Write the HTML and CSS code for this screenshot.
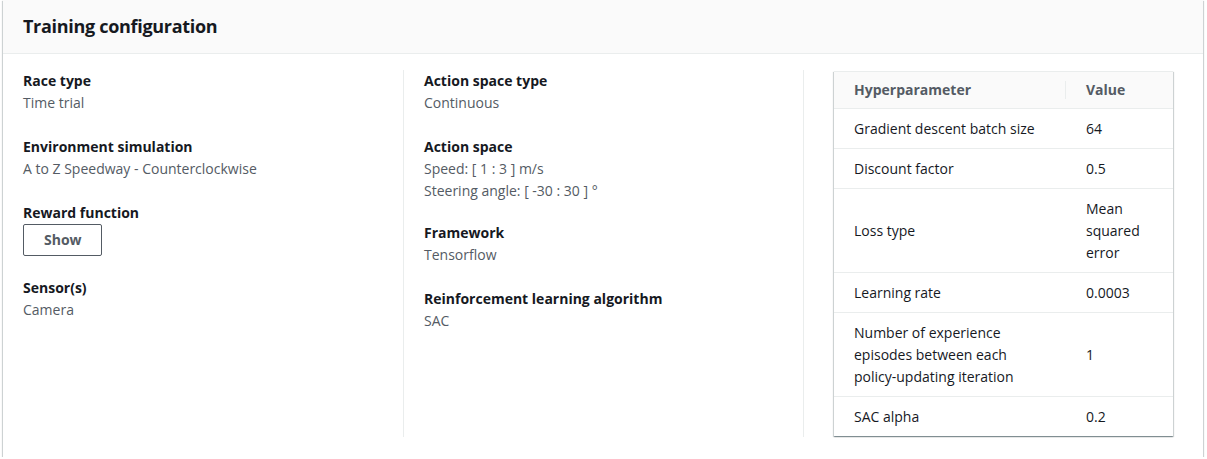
FILE: index.html
```html
<!DOCTYPE html>
<html>
<head>
<meta charset="utf-8">
<link rel="stylesheet" href="styles.css">
</head>
<body>
<div class="page">
  <section class="card">
    <header class="card-header">
      <h2 class="card-title">Training configuration</h2>
    </header>
    <div class="card-body">
      <div class="col">
        <div class="item">
          <div class="label">Race type</div>
          <div class="value">Time trial</div>
        </div>
        <div class="item">
          <div class="label">Environment simulation</div>
          <div class="value">A to Z Speedway - Counterclockwise</div>
        </div>
        <div class="item item-btn">
          <div class="label">Reward function</div>
          <button class="btn">Show</button>
        </div>
        <div class="item">
          <div class="label">Sensor(s)</div>
          <div class="value">Camera</div>
        </div>
      </div>
      <div class="col col-split">
        <div class="item">
          <div class="label">Action space type</div>
          <div class="value">Continuous</div>
        </div>
        <div class="item item-tight">
          <div class="label">Action space</div>
          <div class="value">Speed: [ 1 : 3 ] m/s</div>
          <div class="value">Steering angle: [ -30 : 30 ] °</div>
        </div>
        <div class="item">
          <div class="label">Framework</div>
          <div class="value">Tensorflow</div>
        </div>
        <div class="item">
          <div class="label">Reinforcement learning algorithm</div>
          <div class="value">SAC</div>
        </div>
      </div>
      <div class="col col-split col-table">
        <div class="table-box">
          <table class="table">
            <thead>
              <tr>
                <th class="th-name">Hyperparameter</th>
                <th class="th-value">Value</th>
              </tr>
            </thead>
            <tbody>
              <tr><td class="td-name">Gradient descent batch size</td><td class="td-value">64</td></tr>
              <tr><td class="td-name">Discount factor</td><td class="td-value">0.5</td></tr>
              <tr><td class="td-name">Loss type</td><td class="td-value">Mean squared error</td></tr>
              <tr><td class="td-name">Learning rate</td><td class="td-value">0.0003</td></tr>
              <tr><td class="td-name">Number of experience episodes between each policy-updating iteration</td><td class="td-value">1</td></tr>
              <tr><td class="td-name">SAC alpha</td><td class="td-value">0.2</td></tr>
            </tbody>
          </table>
        </div>
      </div>
    </div>
  </section>
</div>
</body>
</html>
```

FILE: styles.css
```css
* { box-sizing: border-box; }
html, body { margin: 0; padding: 0; background: #ffffff; }
body {
  font-family: "Open Sans", "Noto Sans", Arial, sans-serif;
  font-size: 14px;
  line-height: 22px;
  color: #16191f;
}
.page { padding: 0 4px 0 3px; }
.card {
  width: 1200px;
  background: #fff;
  box-shadow: 0 1px 1px 0 rgba(0,28,36,0.3), 1px 1px 1px 0 rgba(0,28,36,0.15), -1px 1px 1px 0 rgba(0,28,36,0.15);
}
.card-header {
  background: #fafafa;
  height: 54px;
  border-bottom: 1px solid #eaeded;
  padding: 14px 20px 0 20px;
}
.card-title {
  margin: 0;
  font-size: 18px;
  line-height: 24px;
  font-weight: 700;
  letter-spacing: -0.3px;
  color: #16191f;
}
.card-body {
  display: grid;
  grid-template-columns: 400px 400px 400px;
  padding: 16px 0 20px 0;
}
.col { padding: 0 20px; min-height: 367px; }
.col-split { border-left: 1px solid #eaeded; }
.col-table { padding: 1px 30px 0 30px; }
.item { margin-bottom: 22px; }
.item-tight { margin-bottom: 20px; }
.item-btn { margin-bottom: 21px; }
.label { font-weight: 700; color: #16191f; }
.value { color: #545b64; }
.btn {
  display: block;
  font-family: inherit;
  font-size: 14px;
  line-height: 22px;
  font-weight: 700;
  color: #545b64;
  background: #fff;
  border: 1px solid #545b64;
  border-radius: 2px;
  padding: 4px 20px;
  height: 32px;
  width: 79px;
}
.table-box {
  background: #fff;
  box-shadow: 0 1px 1px 0 rgba(0,28,36,0.3), 1px 1px 1px 0 rgba(0,28,36,0.15), -1px 1px 1px 0 rgba(0,28,36,0.15);
  border-top: 1px solid #eaeded;
}
.table {
  width: 100%;
  border-collapse: collapse;
  table-layout: fixed;
}
.table th {
  background: #fafafa;
  text-align: left;
  font-weight: 700;
  color: #545b64;
  height: 36px;
  padding: 0 20px;
  border-bottom: 1px solid #eaeded;
}
.th-name { width: 232px; position: relative; }
.th-name::after {
  content: "";
  position: absolute;
  right: 0;
  top: 9px;
  bottom: 9px;
  border-right: 1px solid #eaeded;
}
.table td {
  padding: 9px 20px 8px 20px;
  border-bottom: 1px solid #eaeded;
  vertical-align: middle;
  color: #16191f;
}
.table tbody tr:last-child td { border-bottom: none; }
```
